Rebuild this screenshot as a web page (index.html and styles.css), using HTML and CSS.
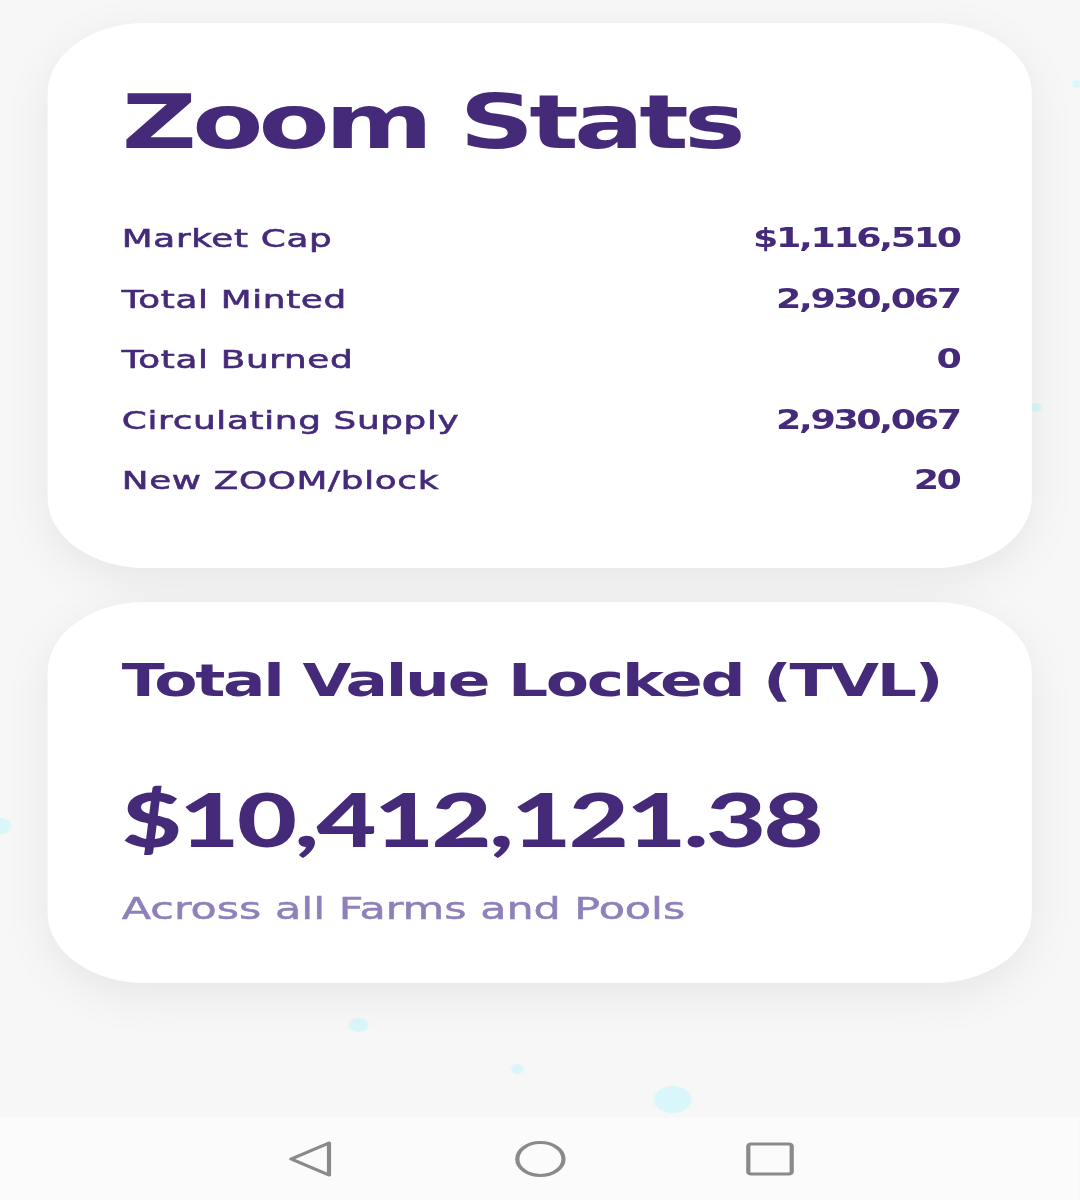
FILE: index.html
```html
<!DOCTYPE html>
<html lang="en">
<head>
<meta charset="utf-8">
<title>Zoom Stats</title>
<link rel="stylesheet" href="styles.css">
</head>
<body>
<div class="screen">
  <span class="bubble b1"></span>
  <span class="bubble b2"></span>
  <span class="bubble b3"></span>
  <span class="bubble b4"></span>
  <span class="bubble b5"></span>
  <span class="bubble b6"></span>

  <main class="content">
    <section class="card stats-card">
      <h1 class="card-title">Zoom Stats</h1>
      <div class="stat-list">
        <div class="stat-row"><span class="stat-label">Market Cap</span><span class="stat-value">$1,116,510</span></div>
        <div class="stat-row"><span class="stat-label">Total Minted</span><span class="stat-value">2,930,067</span></div>
        <div class="stat-row"><span class="stat-label">Total Burned</span><span class="stat-value">0</span></div>
        <div class="stat-row"><span class="stat-label">Circulating Supply</span><span class="stat-value">2,930,067</span></div>
        <div class="stat-row"><span class="stat-label">New ZOOM/block</span><span class="stat-value">20</span></div>
      </div>
    </section>

    <section class="card tvl-card">
      <h2 class="tvl-title">Total Value Locked (TVL)</h2>
      <div class="tvl-amount">$10,412,121.38</div>
      <div class="tvl-note">Across all Farms and Pools</div>
    </section>
  </main>

  <nav class="nav-bar">
    <button class="nav-btn" aria-label="Back">
      <svg viewBox="0 0 34 38" width="34" height="38"><path d="M30 3 L30 35 L3 19 Z" fill="none" stroke="#8a8a8a" stroke-width="3" stroke-linejoin="round"/></svg>
    </button>
    <button class="nav-btn" aria-label="Home">
      <svg viewBox="0 0 38 38" width="38" height="38"><circle cx="19" cy="19" r="16.5" fill="none" stroke="#8a8a8a" stroke-width="3"/></svg>
    </button>
    <button class="nav-btn" aria-label="Recent apps">
      <svg viewBox="0 0 36 36" width="36" height="36"><rect x="2.5" y="3" width="31" height="30" rx="2" fill="none" stroke="#8a8a8a" stroke-width="3"/></svg>
    </button>
  </nav>
</div>
</body>
</html>
```

FILE: styles.css
```css
html, body {
  margin: 0;
  padding: 0;
  background: #f7f7f7;
  overflow: hidden;
}

body {
  width: 1080px;
  height: 1200px;
  font-family: "DejaVu Sans", "Lato", sans-serif;
  color: #452a7a;
}

/* the app view is drawn at its native width and widened to the display */
.screen {
  position: relative;
  width: 771.43px;
  height: 1200px;
  display: flex;
  flex-direction: column;
  transform: scaleX(1.4);
  transform-origin: 0 0;
  background: #f7f7f7;
}

.content {
  flex: 1;
  display: flex;
  flex-direction: column;
  gap: 34px;
  padding: 23px 34px 0;
  position: relative;
  z-index: 1;
}

.card {
  background: #ffffff;
  border-radius: 70px;
  box-shadow: 0 12px 40px rgba(0, 0, 0, 0.07);
  padding: 0 52px 0 53px;
}

.stats-card {
  padding-top: 62px;
  padding-bottom: 73px;
}

.card-title {
  margin: 0;
  font-size: 74px;
  line-height: 74px;
  font-weight: 700;
  letter-spacing: -3.4px;
}

.stat-list {
  margin-top: 64px;
  display: flex;
  flex-direction: column;
  gap: 30.5px;
}

.stat-row {
  height: 30px;
  display: flex;
  justify-content: space-between;
  align-items: baseline;
  font-size: 25.5px;
  line-height: 30px;
}

.stat-label {
  font-weight: 400;
  letter-spacing: 0.5px;
  -webkit-text-stroke: 0.6px #452a7a;
}

.stat-value {
  font-size: 26px;
  line-height: 30px;
  font-weight: 700;
  letter-spacing: -1.7px;
}

.tvl-card {
  padding-top: 56px;
  padding-bottom: 59px;
}

.tvl-title {
  margin: 0;
  font-size: 45px;
  line-height: 45px;
  font-weight: 700;
  letter-spacing: -1.6px;
}

.tvl-amount {
  margin-top: 79px;
  font-family: "Lato", "DejaVu Sans", sans-serif;
  font-size: 74px;
  line-height: 74px;
  font-weight: 900;
  letter-spacing: -1.8px;
}

.tvl-note {
  margin-top: 37.5px;
  font-size: 30.6px;
  line-height: 30px;
  font-weight: 400;
  color: #8f80ba;
  -webkit-text-stroke: 0.5px #8f80ba;
}

/* decorative bubbles floating behind the cards */
.bubble {
  position: absolute;
  border-radius: 50%;
  background: #d9f6fa;
  filter: blur(0.6px);
}
.b1 { left: -6px; top: 818px; width: 14px; height: 16px; }
.b2 { left: 249px; top: 1018px; width: 14px; height: 14px; }
.b3 { left: 365px; top: 1064px; width: 9px; height: 10px; }
.b4 { left: 467px; top: 1086px; width: 27px; height: 27px; }
.b5 { left: 736px; top: 403px; width: 8px; height: 9px; }
.b6 { left: 766px; top: 80px; width: 6px; height: 8px; }

.nav-bar {
  height: 82px;
  flex: none;
  display: flex;
  justify-content: center;
  align-items: center;
  gap: 126px;
  background: #fbfbfb;
  position: relative;
  z-index: 2;
}

.nav-btn {
  width: 38px;
  height: 40px;
  padding: 0;
  border: 0;
  background: none;
  display: flex;
  align-items: center;
  justify-content: center;
}
```
